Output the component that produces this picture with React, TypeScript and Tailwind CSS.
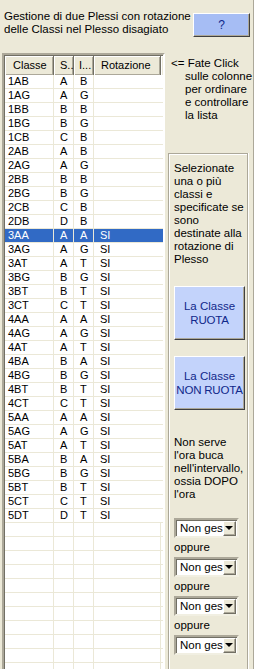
const rows: [string, string, string, string][] = [
  ['1AB', 'A', 'B', ''],
  ['1AG', 'A', 'G', ''],
  ['1BB', 'B', 'B', ''],
  ['1BG', 'B', 'G', ''],
  ['1CB', 'C', 'B', ''],
  ['2AB', 'A', 'B', ''],
  ['2AG', 'A', 'G', ''],
  ['2BB', 'B', 'B', ''],
  ['2BG', 'B', 'G', ''],
  ['2CB', 'C', 'B', ''],
  ['2DB', 'D', 'B', ''],
  ['3AA', 'A', 'A', 'SI'],
  ['3AG', 'A', 'G', 'SI'],
  ['3AT', 'A', 'T', 'SI'],
  ['3BG', 'B', 'G', 'SI'],
  ['3BT', 'B', 'T', 'SI'],
  ['3CT', 'C', 'T', 'SI'],
  ['4AA', 'A', 'A', 'SI'],
  ['4AG', 'A', 'G', 'SI'],
  ['4AT', 'A', 'T', 'SI'],
  ['4BA', 'B', 'A', 'SI'],
  ['4BG', 'B', 'G', 'SI'],
  ['4BT', 'B', 'T', 'SI'],
  ['4CT', 'C', 'T', 'SI'],
  ['5AA', 'A', 'A', 'SI'],
  ['5AG', 'A', 'G', 'SI'],
  ['5AT', 'A', 'T', 'SI'],
  ['5BA', 'B', 'A', 'SI'],
  ['5BG', 'B', 'G', 'SI'],
  ['5BT', 'B', 'T', 'SI'],
  ['5CT', 'C', 'T', 'SI'],
  ['5DT', 'D', 'T', 'SI'],
];

const selected = '3AA';
const emptyRows = Array.from({ length: 12 });

const headerCell =
  'h-full flex items-center border-r border-[#716f64] shadow-[inset_1px_1px_0_#fff,inset_-1px_-1px_0_#aca899]';

const Combo = () => (
  <div className="w-[65px] h-[20px] bg-white flex items-center border-2 border-t-[#aca899] border-l-[#aca899] border-b-[#f1efe2] border-r-[#f1efe2] shadow-[inset_1px_1px_0_#716f64]">
    <div className="flex-1 whitespace-nowrap pl-[4px] text-[11.5px] leading-[14px] text-black">
      Non ges
    </div>
    <div className="w-[14px] h-[15px] mr-[1px] bg-[#ece9d8] flex items-center justify-center border border-t-white border-l-white border-b-[#716f64] border-r-[#716f64] shadow-[inset_-1px_-1px_0_#aca899]">
      <div className="w-0 h-0 border-l-[4px] border-r-[4px] border-t-[4px] border-l-transparent border-r-transparent border-t-black" />
    </div>
  </div>
);

const BigButton = ({ l1, l2 }: { l1: string; l2: string }) => (
  <button className="w-[71px] h-[54px] bg-[#c3d3fb] text-[#10288a] text-[11.5px] leading-[14px] whitespace-nowrap flex flex-col items-center justify-center border border-t-white border-l-white border-b-[#404040] border-r-[#404040] shadow-[inset_-1px_-1px_0_#aca899]">
    <span>{l1}</span>
    <span className="tracking-[-0.2px]">{l2}</span>
  </button>
);

export default function App() {
  return (
    <div className="w-[255px] h-[669px] overflow-hidden bg-[#ece9d8] text-black font-['Liberation_Sans',Arial,sans-serif] text-[11px] flex flex-col shadow-[inset_-1px_0_0_#fff,inset_-2px_0_0_#aca899]">
      {/* top: title + help button */}
      <div className="h-[53px] flex justify-between shrink-0">
        <div className="pl-[4px] pt-[10px] leading-[13px] text-[11.5px]">
          Gestione di due Plessi con rotazione
          <br />
          delle Classi nel Plesso disagiato
        </div>
        <button className="mt-[13px] mr-[5px] w-[57px] h-[24px] bg-[#a6bdf4] text-[#10288a] text-[12px] border border-t-white border-l-white border-b-[#404040] border-r-[#404040] shadow-[inset_-1px_-1px_0_#aca899]">
          ?
        </button>
      </div>

      <div className="flex flex-1 min-h-0">
        {/* list view */}
        <div className="ml-[2px] w-[163px] flex flex-col bg-white border-2 border-b-0 border-t-[#aca899] border-l-[#aca899] border-r-white shadow-[inset_1px_1px_0_#716f64] overflow-hidden">
          <div className="h-[19px] flex shrink-0 bg-[#ece9d8] ml-[1px] mt-[1px]">
            <div className={`${headerCell} w-[49px] pl-[8px]`}>Classe</div>
            <div className={`${headerCell} w-[20px] pl-[6px]`}>S..</div>
            <div className={`${headerCell} w-[20px] pl-[5px]`}>I...</div>
            <div className={`${headerCell} w-[67px] pl-[7px]`}>Rotazione</div>
            <div className="flex-1 h-full shadow-[inset_1px_1px_0_#fff]" />
          </div>
          <div className="flex flex-col ml-[1px]">
            {rows.map(([c, s, i, r]) => {
              const sel = c === selected;
              return (
                <div
                  key={c}
                  className={`h-[14px] flex border-b border-[#ebe8d7] leading-[13px] ${
                    sel ? 'bg-[#316ac5] text-white' : ''
                  }`}
                >
                  <div className="w-[49px] pl-[3px] border-r border-[#ebe8d7]">{c}</div>
                  <div className="w-[20px] pl-[6px] border-r border-[#ebe8d7]">{s}</div>
                  <div className="w-[20px] pl-[6px] border-r border-[#ebe8d7]">{i}</div>
                  <div className="w-[67px] pl-[6px]">{r}</div>
                </div>
              );
            })}
            {emptyRows.map((_, k) => (
              <div key={k} className="h-[14px] flex border-b border-[#ebe8d7]">
                <div className="w-[49px] border-r border-[#ebe8d7]" />
                <div className="w-[20px] border-r border-[#ebe8d7]" />
                <div className="w-[20px] border-r border-[#ebe8d7]" />
                <div className="w-[67px] border-r border-[#ebe8d7]" />
              </div>
            ))}
          </div>
        </div>

        {/* right panel */}
        <div className="flex-1 flex flex-col text-[11.5px] leading-[13px]">
          <div className="pt-[4px] pl-[6px]">
            <div>&lt;= Fate Click</div>
            <div className="pl-[14px]">
              sulle colonne
              <br />
              per ordinare
              <br />
              e controllare
              <br />
              la lista
            </div>
          </div>

          <div className="mt-[31px] ml-[3px] w-[80px] flex-1 border border-b-0 border-[#aca899] shadow-[inset_1px_1px_0_#fff,1px_0_0_#fff] pl-[5px] pt-[8px] flex flex-col">
            <div>
              Selezionate
              <br />
              una o più
              <br />
              classi e
              <br />
              specificate se
              <br />
              sono
              <br />
              destinate alla
              <br />
              rotazione di
              <br />
              Plesso
            </div>
            <div className="mt-[20px]">
              <BigButton l1="La Classe" l2="RUOTA" />
            </div>
            <div className="mt-[16px]">
              <BigButton l1="La Classe" l2="NON RUOTA" />
            </div>
            <div className="mt-[26px]">
              Non serve
              <br />
              l'ora buca
              <br />
              nell'intervallo,
              <br />
              ossia DOPO
              <br />
              l'ora
            </div>
            <div className="mt-[17px] flex flex-col">
              <Combo />
              <div className="h-[19px] flex items-center">oppure</div>
              <Combo />
              <div className="h-[19px] flex items-center">oppure</div>
              <Combo />
              <div className="h-[19px] flex items-center">oppure</div>
              <Combo />
            </div>
          </div>
        </div>
      </div>
    </div>
  );
}
